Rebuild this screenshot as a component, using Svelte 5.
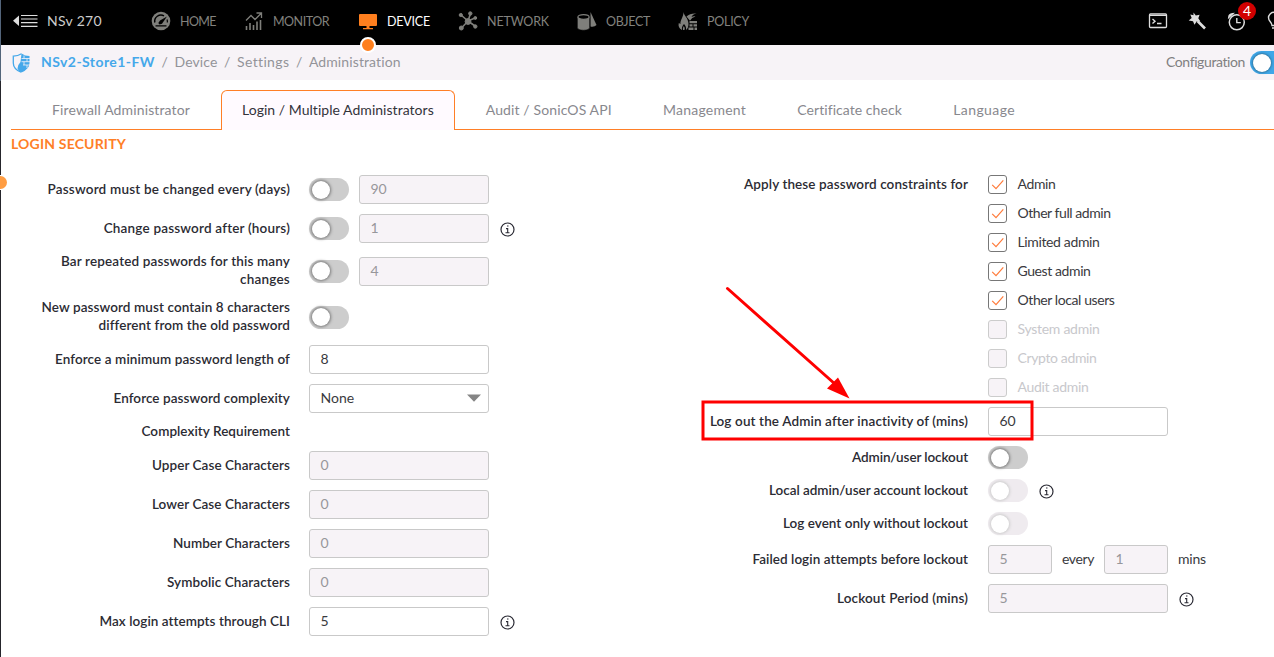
<script lang="ts">
  // Spaces the letters of a text so that it takes the given width.
  function fit(node: HTMLElement, width: number) {
    const own = node.getBoundingClientRect().width;
    const count = (node.textContent ?? '').trim().length;
    node.style.letterSpacing = `${(width - own) / count}px`;
  }

  const nav = [
    { name: 'HOME', icon: 'home', w: 36, space: 28 },
    { name: 'MONITOR', icon: 'monitor', w: 56, space: 29 },
    { name: 'DEVICE', icon: 'device', w: 43, space: 28 },
    { name: 'NETWORK', icon: 'network', w: 62, space: 28 },
    { name: 'OBJECT', icon: 'object', w: 44, space: 28 },
    { name: 'POLICY', icon: 'policy', w: 42, space: 0 }
  ];
  const crumbs = [['Device', 43], ['Settings', 52], ['Administration', 92]] as const;
  const tabs = [
    { name: 'Firewall Administrator', w: 138 },
    { name: 'Login / Multiple Administrators', w: 192 },
    { name: 'Audit / SonicOS API', w: 126 },
    { name: 'Management', w: 83 },
    { name: 'Certificate check', w: 104.5 },
    { name: 'Language', w: 62 }
  ];
  type Row = { label: [string, number][]; toggle?: string; value?: string; off?: boolean; select?: boolean; info?: boolean };
  const left: Row[] = [
    { label: [['Password must be changed every (days)', 242.5]], toggle: 'on', value: '90', off: true },
    { label: [['Change password after (hours)', 186]], toggle: 'on', value: '1', off: true, info: true },
    { label: [['Bar repeated passwords for this many', 229], ['changes', 50]], toggle: 'on', value: '4', off: true },
    { label: [['New password must contain 8 characters', 248.5], ['different from the old password', 191]], toggle: 'on' },
    { label: [['Enforce a minimum password length of', 235]], value: '8' },
    { label: [['Enforce password complexity', 176.5]], value: 'None', select: true },
    { label: [['Complexity Requirement', 148.5]] },
    { label: [['Upper Case Characters', 138]], value: '0', off: true },
    { label: [['Lower Case Characters', 138]], value: '0', off: true },
    { label: [['Number Characters', 117]], value: '0', off: true },
    { label: [['Symbolic Characters', 123]], value: '0', off: true },
    { label: [['Max login attempts through CLI', 190]], value: '5', info: true }
  ];
  const roles = [
    { name: 'Admin', w: 38, on: true },
    { name: 'Other full admin', w: 93, on: true },
    { name: 'Limited admin', w: 82, on: true },
    { name: 'Guest admin', w: 73, on: true },
    { name: 'Other local users', w: 97, on: true },
    { name: 'System admin', w: 82, on: false },
    { name: 'Crypto admin', w: 79, on: false },
    { name: 'Audit admin', w: 71, on: false }
  ];
  const right: Row[] = [
    { label: [['Log out the Admin after inactivity of (mins)', 258]], value: '60' },
    { label: [['Admin/user lockout', 116]], toggle: 'on' },
    { label: [['Local admin/user account lockout', 199]], toggle: 'dim', info: true },
    { label: [['Log event only without lockout', 185]], toggle: 'dim' }
  ];
</script>

{#snippet info()}
  <svg class="info" viewBox="0 0 15 15" width="15" height="15">
    <circle cx="7.5" cy="7.5" r="6.5" fill="none" stroke="#2b2b35" stroke-width="1.2" />
    <path d="M7 4h1.500M6 6.600h1.700v4M5.500 10.800h4" fill="none" stroke="#2b2b35" stroke-width="1.1" />
  </svg>
{/snippet}

{#snippet field(row: Row)}
  <div class="row">
    <div class="label">
      {#each row.label as [text, w]}<div><span use:fit={w}>{text}</span></div>{/each}
    </div>
    {#if row.toggle}<span class="toggle" class:dim={row.toggle === 'dim'}><i></i></span>{/if}
    {#if row.value}
      <div class="input" class:off={row.off} class:short={row.toggle}>
        <span>{row.value}</span>
        {#if row.select}<svg width="14" height="8" viewBox="0 0 14 8"><path d="M0 .5h14L7 7.7z" fill="#858585" /></svg>{/if}
      </div>
    {/if}
    {#if row.info}{@render info()}{/if}
  </div>
{/snippet}

<div class="app">
  <header>
    <svg class="burger" width="25" height="14" viewBox="0 0 25 14">
      <path d="M6 1.500v10.600L0 6.800z" fill="#ddd" />
      <path d="M8 1.500h16.500M8 5h16.500M8 8.700h16.500M8 12.300h16.500" stroke="#ddd" stroke-width="1.200" />
    </svg>
    <span class="model"><span use:fit={55}>NSv 270</span></span>
    <nav>
      {#each nav as item}
        <div class="item" class:current={item.icon === 'device'} style:margin-right="{item.space}px">
          <svg width="20" height="20" viewBox="0 0 20 20">
            {#if item.icon === 'home'}
              <circle cx="10" cy="10" r="9.300" fill="#7f7f7b" />
              <path d="M3.800 11.500A6.300 6.300 0 0 1 13 4.800" fill="none" stroke="#000" stroke-width="1.500" />
              <path d="M16 5.500 9 9.500 7.300 12l1.200 1.500 2.500-.8z" fill="#000" />
              <path d="M4.500 14.800h11M16 8.500q.6 1.500.3 3" fill="none" stroke="#000" stroke-width="1.200" />
            {:else if item.icon === 'monitor'}
              <path d="M2.500 19v-4M6 19v-7M9.500 19v-5M13 19v-8.500M16.500 19V9" fill="none" stroke="#7f7f7b" stroke-width="1.600" />
              <path d="M2 9.500 7 4.500l4 4 6-6M12.500 2h5v5" fill="none" stroke="#7f7f7b" stroke-width="1.300" />
            {:else if item.icon === 'device'}
              <path d="M2 3h16a1 1 0 0 1 1 1v10a1 1 0 0 1-1 1H2a1 1 0 0 1-1-1V4a1 1 0 0 1 1-1zM8.500 15h3v2h-3zM5 17h10v1.300H5z" fill="#ff7f1e" />
            {:else if item.icon === 'network'}
              <g fill="#7f7f7b" stroke="#7f7f7b">
                <path d="M10 10 3 4M10 10l2.500-7.500M10 10l7-3M10 10 3.500 17M10 10l7 5" stroke-width="1.600" />
                <circle cx="10" cy="10.500" r="2.900" />
                <circle cx="2.800" cy="4" r="1.600" /><circle cx="12.300" cy="2.500" r="1.700" /><circle cx="17.300" cy="7" r="1.400" />
                <circle cx="3.300" cy="17" r="2" /><circle cx="17.300" cy="15.500" r="1.700" />
              </g>
            {:else if item.icon === 'object'}
              <path d="M13.500 1 19.500 14q-2 2.200-6 1.500z" fill="#7f7f7b" />
              <path d="M.3 6v10.500c0 3.700 12.400 3.700 12.400 0V6z" fill="#7f7f7b" stroke="#000" stroke-width=".6" />
              <ellipse cx="6.500" cy="6" rx="5.600" ry="2.300" fill="#000" stroke="#7f7f7b" stroke-width="1.200" />
            {:else}
              <path d="M5.500 1c.5 4 5 6 5 12 0 3-1 5-2.500 6 .5-3-1-5-2-6-1.500 2-2.500 3-2 6C1 17.500 0 15 .8 12l1.700 1C2 9 5.500 6 5.500 1z" fill="#7f7f7b" />
              <path d="M8.500 5.500Q12 2 18.500 2.500q-4 .8-5 3.500 2-1 4-.5-4 1-5.500 4.200z" fill="#7f7f7b" />
              <path d="M11.500 10h7.500v2.200h-7.500zM11.500 13.200h3v2.200h-3zM15.500 13.200h3.500v2.200h-3.500zM10.500 16.500h5v2.500h-5zM16.500 16.500h2.500v2.500h-2.500z" fill="#7f7f7b" />
              <path d="M5.800 15q1.600 2 .7 4h-1.500q-.6-2 .8-4z" fill="#7f7f7b" />
            {/if}
          </svg>
          <span class="name"><span use:fit={item.w}>{item.name}</span></span>
          {#if item.icon === 'device'}<i class="dot"></i>{/if}
        </div>
      {/each}
    </nav>
    <div class="tools">
      <svg width="20" height="16" viewBox="0 0 20 16" fill="none" stroke="#ddd">
        <rect x="1.500" y="1" width="17" height="13.500" rx="1" stroke-width="1.300" /><path d="M1.500 2.500h17" stroke-width="1" />
        <path d="M4.500 6 7 8.200 4.500 10.500M9 10.500h4.500" stroke-width="1.400" />
      </svg>
      <svg width="18" height="18" viewBox="0 0 18 18">
        <path d="M5.500.5 7.800 3.500l3.800-.8-1.300 3.500 2 3-3.500.1-2.300 3.500L5 9.300.7 8.500 3.700 6 2.300 2.500l3.200.7z" fill="#ddd" />
        <path d="M9.500 9l7.500 7.500" stroke="#ddd" stroke-width="2.600" />
      </svg>
      <div class="clock">
        <svg width="20" height="20" viewBox="0 0 20 20" fill="none" stroke="#ddd">
          <circle cx="9.800" cy="11.300" r="7.500" stroke-width="1.500" /><path d="M9.800 7v4.600h4" stroke-width="1.400" />
          <path d="M2 6Q2.300 3.300 5.300 2.900z" fill="#ddd" stroke-width="1.800" />
        </svg>
        <span class="badge">4</span>
      </div>
      <svg class="bulb" width="14" height="20" viewBox="0 0 14 20" fill="none" stroke="#ddd" stroke-width="1.400">
        <path d="M5 14.500C5 11 1.500 10.500 1.500 6.800a5.500 5.500 0 0 1 11 0C12.500 10.500 9 11 9 14.500zM5 17h4" />
      </svg>
    </div>
  </header>

  <div class="crumbs">
    <svg width="20" height="20" viewBox="0 0 20 20">
      <path d="M10.500.8Q7 3 2.300 3.200V10q0 6 7.700 9.200" fill="none" stroke="#45a8ea" stroke-width="1.300" />
      <path d="M10.500.5Q14 3 18.500 3v7q0 6-8 9.500-3.300-1.500-4-4Q6.500 12 9.500 9z" fill="#45a8ea" />
      <path d="M10.500 5.500H19M10.500 8.700H19M12 12h7M13 2.500v3M16 5.500v3.200M13 8.700V12M16 12v3" stroke="#f7f3f7" stroke-width=".8" />
    </svg>
    <div class="path">
      <b><span use:fit={114}>NSv2-Store1-FW</span></b>
      {#each crumbs as [name, w]}<em>/</em><span use:fit={w}>{name}</span>{/each}
      <span class="config"><span use:fit={79}>Configuration</span></span>
    </div>
    <span class="switch"><i></i></span>
  </div>

  <div class="tabs">
    {#each tabs as tab, n}
      <div class="tab" class:active={n === 1}><span use:fit={tab.w}>{tab.name}</span></div>
    {/each}
    <div class="rest"></div>
  </div>

  <h1><span use:fit={115}>LOGIN SECURITY</span></h1>

  <main>
    <section class="left">
      {#each left as row}{@render field(row)}{/each}
    </section>
    <section class="right">
      <div class="row top">
        <div class="label"><span use:fit={224}>Apply these password constraints for</span></div>
        <div class="roles">
          {#each roles as role}
            <div class="role" class:disabled={!role.on}>
              <i>{#if role.on}<svg width="17" height="17" viewBox="0 0 17 17"><path d="M3.200 8.800 7 12.700 14.300 4.300" fill="none" stroke="#ff7b3a" stroke-width="1.200" /></svg>{/if}</i>
              <div class="name"><span use:fit={role.w}>{role.name}</span></div>
            </div>
          {/each}
        </div>
      </div>
      {#each right as row}{@render field(row)}{/each}
      <div class="row">
        <div class="label"><span use:fit={215}>Failed login attempts before lockout</span></div>
        <div class="input off small"><span>5</span></div>
        <span class="unit"><span use:fit={32}>every</span></span>
        <div class="input off small"><span>1</span></div>
        <span class="unit"><span use:fit={28}>mins</span></span>
      </div>
      {@render field({ label: [['Lockout Period (mins)', 131]], value: '5', off: true, info: true })}
    </section>
  </main>

  <i class="edge"></i>
  <i class="handle"></i>
  <svg class="callout" width="340" height="160" viewBox="0 0 340 160">
    <path d="M27.500 8.500 135 104" stroke="#fe0000" stroke-width="3" stroke-linecap="round" />
    <path d="M149.500 118.500 127 108.500 138 97.500z" fill="#fe0000" />
    <rect x="3" y="122" width="329" height="37" fill="none" stroke="#fe0000" stroke-width="3" />
  </svg>
</div>

<style>
  :global(body) { margin: 0; background: #fff; overflow: hidden; }
  .app { position: relative; width: 1274px; height: 657px; overflow: hidden; font: 14px/18px Lato, sans-serif; color: #3a3a40; }
  svg { display: block; flex: none; }
  span { white-space: nowrap; }
  i { display: block; box-sizing: border-box; }
  header { display: flex; align-items: center; height: 45px; padding-left: 13px; background: #000; box-sizing: border-box; }
  .burger { margin-top: -4px; }
  .model { width: 96px; margin: -3px 0 0 9px; color: #ccc; }
  nav { display: flex; margin: -3px 0 0 8px; }
  .item { position: relative; display: flex; align-items: center; gap: 9px; font-size: 12.5px; color: #82827e; }
  .item .name { padding-top: 2px; }
  .item.current { color: #fff; }
  .dot { position: absolute; left: 2px; top: 26px; width: 16px; height: 16px; border: 2px solid #fff; border-radius: 50%; background: #ff7f1e; }
  .tools { display: flex; align-items: center; margin: -3px 0 0 auto; width: 126px; flex: none; }
  .tools > svg:nth-child(2) { margin-left: 20px; }
  .clock { position: relative; margin-left: 21px; }
  .badge { position: absolute; left: 11px; top: -9px; width: 18px; height: 18px; border-radius: 50%; background: #d10000; color: #fff; text-align: center; }
  .bulb { margin-left: 20px; }
  .crumbs { display: flex; align-items: center; height: 35px; padding-left: 11px; background: #f7f3f7; color: #939399; box-sizing: border-box; }
  .path { display: flex; flex: 1; padding-bottom: 2px; }
  .crumbs b { margin-left: 10px; color: #45a8ea; font-weight: 700; }
  .crumbs em { width: 19.500px; text-align: center; font-style: normal; }
  .config { width: 84px; margin-left: auto; color: #808080; }
  .switch { width: 24px; height: 23px; border-radius: 12px 0 0 12px; background: #3fa7e8; flex: none; }
  .switch i { width: 18px; height: 18px; margin: 2.500px; border-radius: 50%; background: #fff; box-shadow: 0 0 3px #245; }
  .tabs { display: flex; height: 50px; padding: 10px 0 0 11px; box-sizing: border-box; }
  .tab { padding: 11px 31px 10px; border-bottom: 1px solid #ff7f27; color: #88888e; height: 18px; }
  .tab:first-child { padding: 11px 31px 10px 41px; }
  .tab:nth-child(n + 3) { padding-right: 20.300px; }
  .tab.active { padding: 10px 20px 11px; border: 1px solid #ff7f27; border-bottom: 0; border-radius: 6px 6px 0 0; background: #fffaff; color: #33333b; }
  .rest { flex: 1; border-bottom: 1px solid #ff7f27; }
  h1 { margin: 5px 0 0 11px; font: 700 14px/18px Lato, sans-serif; color: #ff7f27; }
  main { display: flex; padding-top: 22px; }
  section { display: flex; flex-direction: column; gap: 10px; }
  .left { width: 600px; }
  .left .label { width: 290px; }
  .right .label { width: 368px; }
  .row { display: flex; align-items: center; }
  .row.top { align-items: flex-start; }
  .label { flex: none; display: flex; flex-direction: column; align-items: flex-end; font-size: 13.500px; font-weight: 600; color: #2b2b33; margin-right: 19px; }
  .right .label { margin-right: 20px; }
  .row:not(.top) .label { margin-top: -1px; margin-bottom: 1px; }
  .toggle { width: 40px; height: 23px; border-radius: 12px; background: #cdcdcd; flex: none; }
  .toggle i { width: 18px; height: 18px; margin: 2.500px; border-radius: 50%; background: #fff; box-shadow: 0 0 3px 1px #777; }
  .toggle.dim { background: #efebef; }
  .toggle.dim i { box-shadow: 0 0 3px 1px #ccc; }
  .input { box-sizing: border-box; width: 180px; height: 29px; border: 1px solid #c9c9c9; border-radius: 3px; padding: 0 7px 1px 10.500px; display: flex; align-items: center; justify-content: space-between; background: #fff; }
  .input.off { background: #f7f3f7; color: #97979b; }
  .input.short { width: 130px; margin-left: 10px; }
  .input.small { width: 64px; }
  .info { margin: 1px 0 0 11px; }
  .unit { width: 32px; margin: -1px 10px 0; }
  .roles { display: flex; flex-direction: column; gap: 10px; }
  .role { display: flex; align-items: center; height: 19px; gap: 10.500px; }
  .role .name { padding-bottom: 2px; }
  .role i { width: 19px; height: 19px; border: 1px solid #777; border-radius: 3px; }
  .role.disabled { color: #c8c8cc; }
  .role.disabled i { border-color: #ccc; background: #f7f3f7; }
  .edge { position: absolute; left: 0; top: 0; width: 1px; height: 657px; background: linear-gradient(#53647a 81px, #25252b 81px); }
  .handle { position: absolute; left: -6px; top: 176px; width: 13px; height: 13px; border-radius: 50%; background: #ff9d42; box-shadow: 0 0 0 1px #fff; }
  .callout { position: absolute; left: 700px; top: 280px; overflow: visible; }
</style>
